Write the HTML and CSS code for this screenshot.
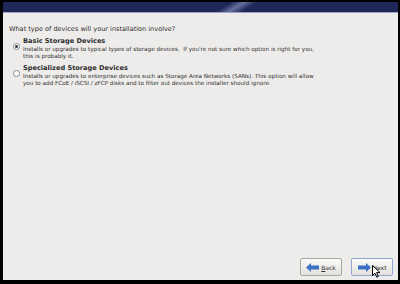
FILE: index.html
```html
<!DOCTYPE html>
<html lang="en">
<head>
    <meta charset="UTF-8">
    <title>Storage Devices</title>
    <link rel="stylesheet" href="styles.css">
</head>
<body>
    <div class="screen">
        <div class="banner"><div class="streak"></div></div>
        <div class="content">
            <p class="question">What type of devices will your installation involve?</p>

            <label class="option">
                <span class="radio checked"></span>
                <span class="option-text">
                    <span class="option-title">Basic Storage Devices</span>
                    <span class="option-desc">Installs or upgrades to typical types of storage devices.&nbsp; If you're not sure which option is right for you,<br>this is probably it.</span>
                </span>
            </label>

            <label class="option">
                <span class="radio"></span>
                <span class="option-text">
                    <span class="option-title">Specialized Storage Devices</span>
                    <span class="option-desc">Installs or upgrades to enterprise devices such as Storage Area Networks (SANs). This option will allow<br>you to add FCoE / iSCSI / zFCP disks and to filter out devices the installer should ignore.</span>
                </span>
            </label>
        </div>
        <div class="buttons">
            <button class="btn">
                <svg width="13" height="9" viewBox="0 0 13 9"><path d="M0 4.5 L5 0 L5 2.5 L13 2.5 L13 6.5 L5 6.5 L5 9 Z" fill="#3b72c4"/></svg>
                <span><u>B</u>ack</span>
            </button>
            <button class="btn btn-next">
                <svg width="13" height="9" viewBox="0 0 13 9"><path d="M13 4.5 L8 0 L8 2.5 L0 2.5 L0 6.5 L8 6.5 L8 9 Z" fill="#3b72c4"/></svg>
                <span><u>N</u>ext</span>
                <svg class="cursor" width="9" height="13" viewBox="0 0 9 13"><path d="M0.5 0.5 L0.5 10.5 L3 8.2 L4.8 12.2 L6.3 11.5 L4.6 7.6 L8 7.6 Z" fill="#fff" stroke="#000" stroke-width="1"/></svg>
            </button>
        </div>
    </div>
</body>
</html>
```

FILE: styles.css
```css
body {
    margin: 0;
    background-color: #000;
    font-family: "DejaVu Sans", sans-serif;
    color: #2e2e2e;
}

.screen {
    width: 395px;
    height: 278px;
    margin: 2px 2px 4px 3px;
    background-color: #edecea;
    display: flex;
    flex-direction: column;
}

.banner {
    height: 10px;
    background-color: #1e2758;
    border-bottom: 1px solid #9aa3c8;
    position: relative;
    overflow: hidden;
}

.streak {
    position: absolute;
    left: 212px;
    top: -4px;
    width: 40px;
    height: 20px;
    background: linear-gradient(100deg, rgba(255,255,255,0) 20%, rgba(190,200,240,0.45) 50%, rgba(255,255,255,0) 80%);
    transform: skewX(-55deg);
}

.content {
    flex: 1;
    padding: 12px 6px 0 6px;
}

.question {
    margin: 0 0 4px 0;
    font-size: 6.55px;
    line-height: 8px;
}

.option {
    display: flex;
    align-items: flex-start;
    gap: 3px;
    margin-bottom: 4px;
    padding-left: 4px;
}

.radio {
    width: 5px;
    height: 5px;
    margin-top: 6px;
    border: 1px solid #8a8a8a;
    border-radius: 50%;
    background-color: #fff;
    position: relative;
    flex-shrink: 0;
}

.radio.checked::after {
    content: "";
    position: absolute;
    left: 1px;
    top: 1px;
    width: 3px;
    height: 3px;
    border-radius: 50%;
    background-color: #333;
}

.option-text {
    display: flex;
    flex-direction: column;
}

.option-title {
    font-weight: bold;
    font-size: 6.6px;
    line-height: 9px;
}

.option-desc {
    font-size: 5.65px;
    line-height: 7px;
}

.buttons {
    display: flex;
    justify-content: flex-end;
    gap: 9px;
    padding: 0 5px 4px 0;
}

.btn {
    width: 42px;
    height: 18px;
    display: flex;
    align-items: center;
    justify-content: center;
    gap: 2px;
    padding: 0;
    font-family: "DejaVu Sans", sans-serif;
    font-size: 6px;
    color: #2e2e2e;
    background: linear-gradient(#fbfbfa, #e2e0dc);
    border: 1px solid #a9a7a2;
    border-radius: 2px;
}

.btn-next {
    border-color: #8ea6d0;
    position: relative;
}

.cursor {
    position: absolute;
    left: 20px;
    top: 6px;
}
```
